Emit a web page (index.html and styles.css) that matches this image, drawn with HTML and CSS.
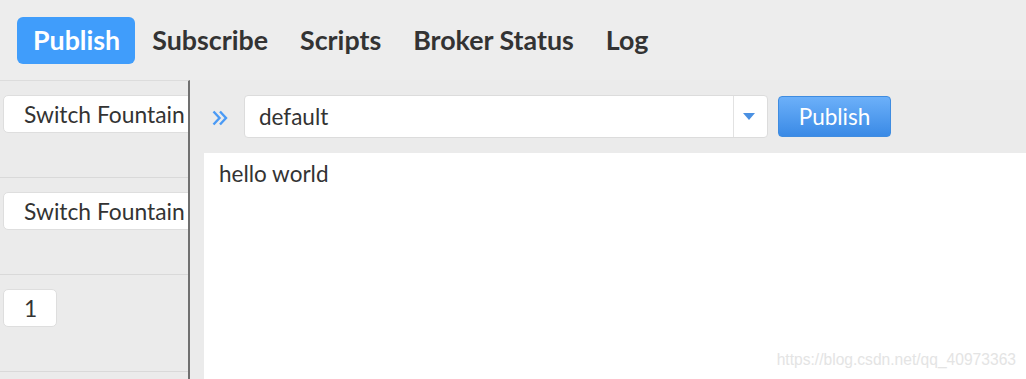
FILE: index.html
```html
<!DOCTYPE html>
<html>
<head>
<meta charset="utf-8">
<link rel="stylesheet" href="styles.css">
</head>
<body>
<div class="nav">
  <div class="tab active">Publish</div>
  <div class="tab">Subscribe</div>
  <div class="tab">Scripts</div>
  <div class="tab">Broker Status</div>
  <div class="tab">Log</div>
</div>
<div class="content">
  <div class="sidebar">
    <div class="item"><div class="sbtn">Switch Fountain</div></div>
    <div class="item"><div class="sbtn">Switch Fountain</div></div>
    <div class="item"><div class="sbtn">1</div></div>
    <div class="item"></div>
  </div>
  <div class="main">
    <div class="toprow">
      <svg class="chev" width="16" height="16" viewBox="0 0 16 16">
        <path d="M1.5 1.5 L7.5 8 L1.5 14.5 M8 1.5 L14 8 L8 14.5" fill="none" stroke="#4a9af5" stroke-width="2.4"/>
      </svg>
      <div class="combo">
        <div class="combo-text">default</div>
        <div class="combo-drop"><span class="caret"></span></div>
      </div>
      <div class="pubbtn">Publish</div>
    </div>
    <div class="editor">hello world
      <div class="watermark">https://blog.csdn.net/qq_40973363</div>
    </div>
  </div>
</div>
</body>
</html>
```
FILE: styles.css
```css
html, body {
  margin: 0;
  padding: 0;
}
body {
  background: #ececec;
  font-family: Lato, "Open Sans", sans-serif;
  color: #333;
  width: 1026px;
  height: 379px;
  overflow: hidden;
}
.nav {
  height: 80px;
  box-sizing: border-box;
  padding: 17px 17px 0 17px;
  display: flex;
  align-items: flex-start;
  background: #ededed;
}
.tab {
  height: 47px;
  line-height: 47px;
  padding: 0 16px;
  font-size: 26.8px;
  font-weight: bold;
  color: #333;
  border-radius: 6px;
}
.tab.active {
  background: #409dfb;
  color: #fff;
  padding: 0 15px 0 16px;
  margin-right: 1px;
}
.content {
  display: flex;
  height: 299px;
}
.sidebar {
  width: 188px;
  flex: none;
  border-right: 2px solid #707070;
  border-top: 1px solid #dcdcdc;
  overflow: hidden;
  background: #ebebeb;
}
.item {
  border-bottom: 1px solid #d9d9d9;
  padding: 14px 0 0 3px;
  height: 82px;
  white-space: nowrap;
}
.sbtn {
  display: inline-block;
  height: 36px;
  line-height: 36px;
  padding: 0 19px 0 20px;
  background: #fff;
  border: 1px solid #dedede;
  border-radius: 5px;
  font-size: 22.8px;
  color: #333;
}
.main {
  flex: 1;
  display: flex;
  flex-direction: column;
  padding: 15px 0 0 14px;
  background: #ebebeb;
}
.toprow {
  display: flex;
  align-items: center;
  height: 43px;
}
.chev {
  margin-left: 8px;
  margin-right: 16px;
  margin-top: 2px;
}
.combo {
  width: 524px;
  height: 43px;
  box-sizing: border-box;
  border: 1px solid #dcdcdc;
  border-radius: 4px;
  background: #fff;
  display: flex;
}
.combo-text {
  flex: 1;
  font-size: 22.5px;
  line-height: 41px;
  padding-left: 14px;
  color: #333;
}
.combo-drop {
  width: 33px;
  border-left: 1px solid #e2e2e2;
  display: flex;
  align-items: center;
  justify-content: center;
}
.caret {
  width: 0;
  height: 0;
  margin-right: 3px;
  border-left: 6px solid transparent;
  border-right: 6px solid transparent;
  border-top: 7px solid #4a90e2;
}
.pubbtn {
  margin-left: 10px;
  width: 113px;
  height: 41px;
  box-sizing: border-box;
  border: 1px solid #3f8ce0;
  border-radius: 4px;
  background: linear-gradient(#6cb0f9, #3a8ae6);
  color: #fff;
  font-size: 22.5px;
  line-height: 39px;
  text-align: center;
}
.editor {
  margin-top: 15px;
  flex: 1;
  background: #fff;
  padding: 6px 15px;
  font-size: 22.5px;
  line-height: 30px;
  color: #333;
  position: relative;
}
.watermark {
  position: absolute;
  right: 10px;
  bottom: 10px;
  font-family: "Liberation Sans", Arial, sans-serif;
  font-size: 15.6px;
  line-height: 18px;
  color: #e4e4e4;
}
```
